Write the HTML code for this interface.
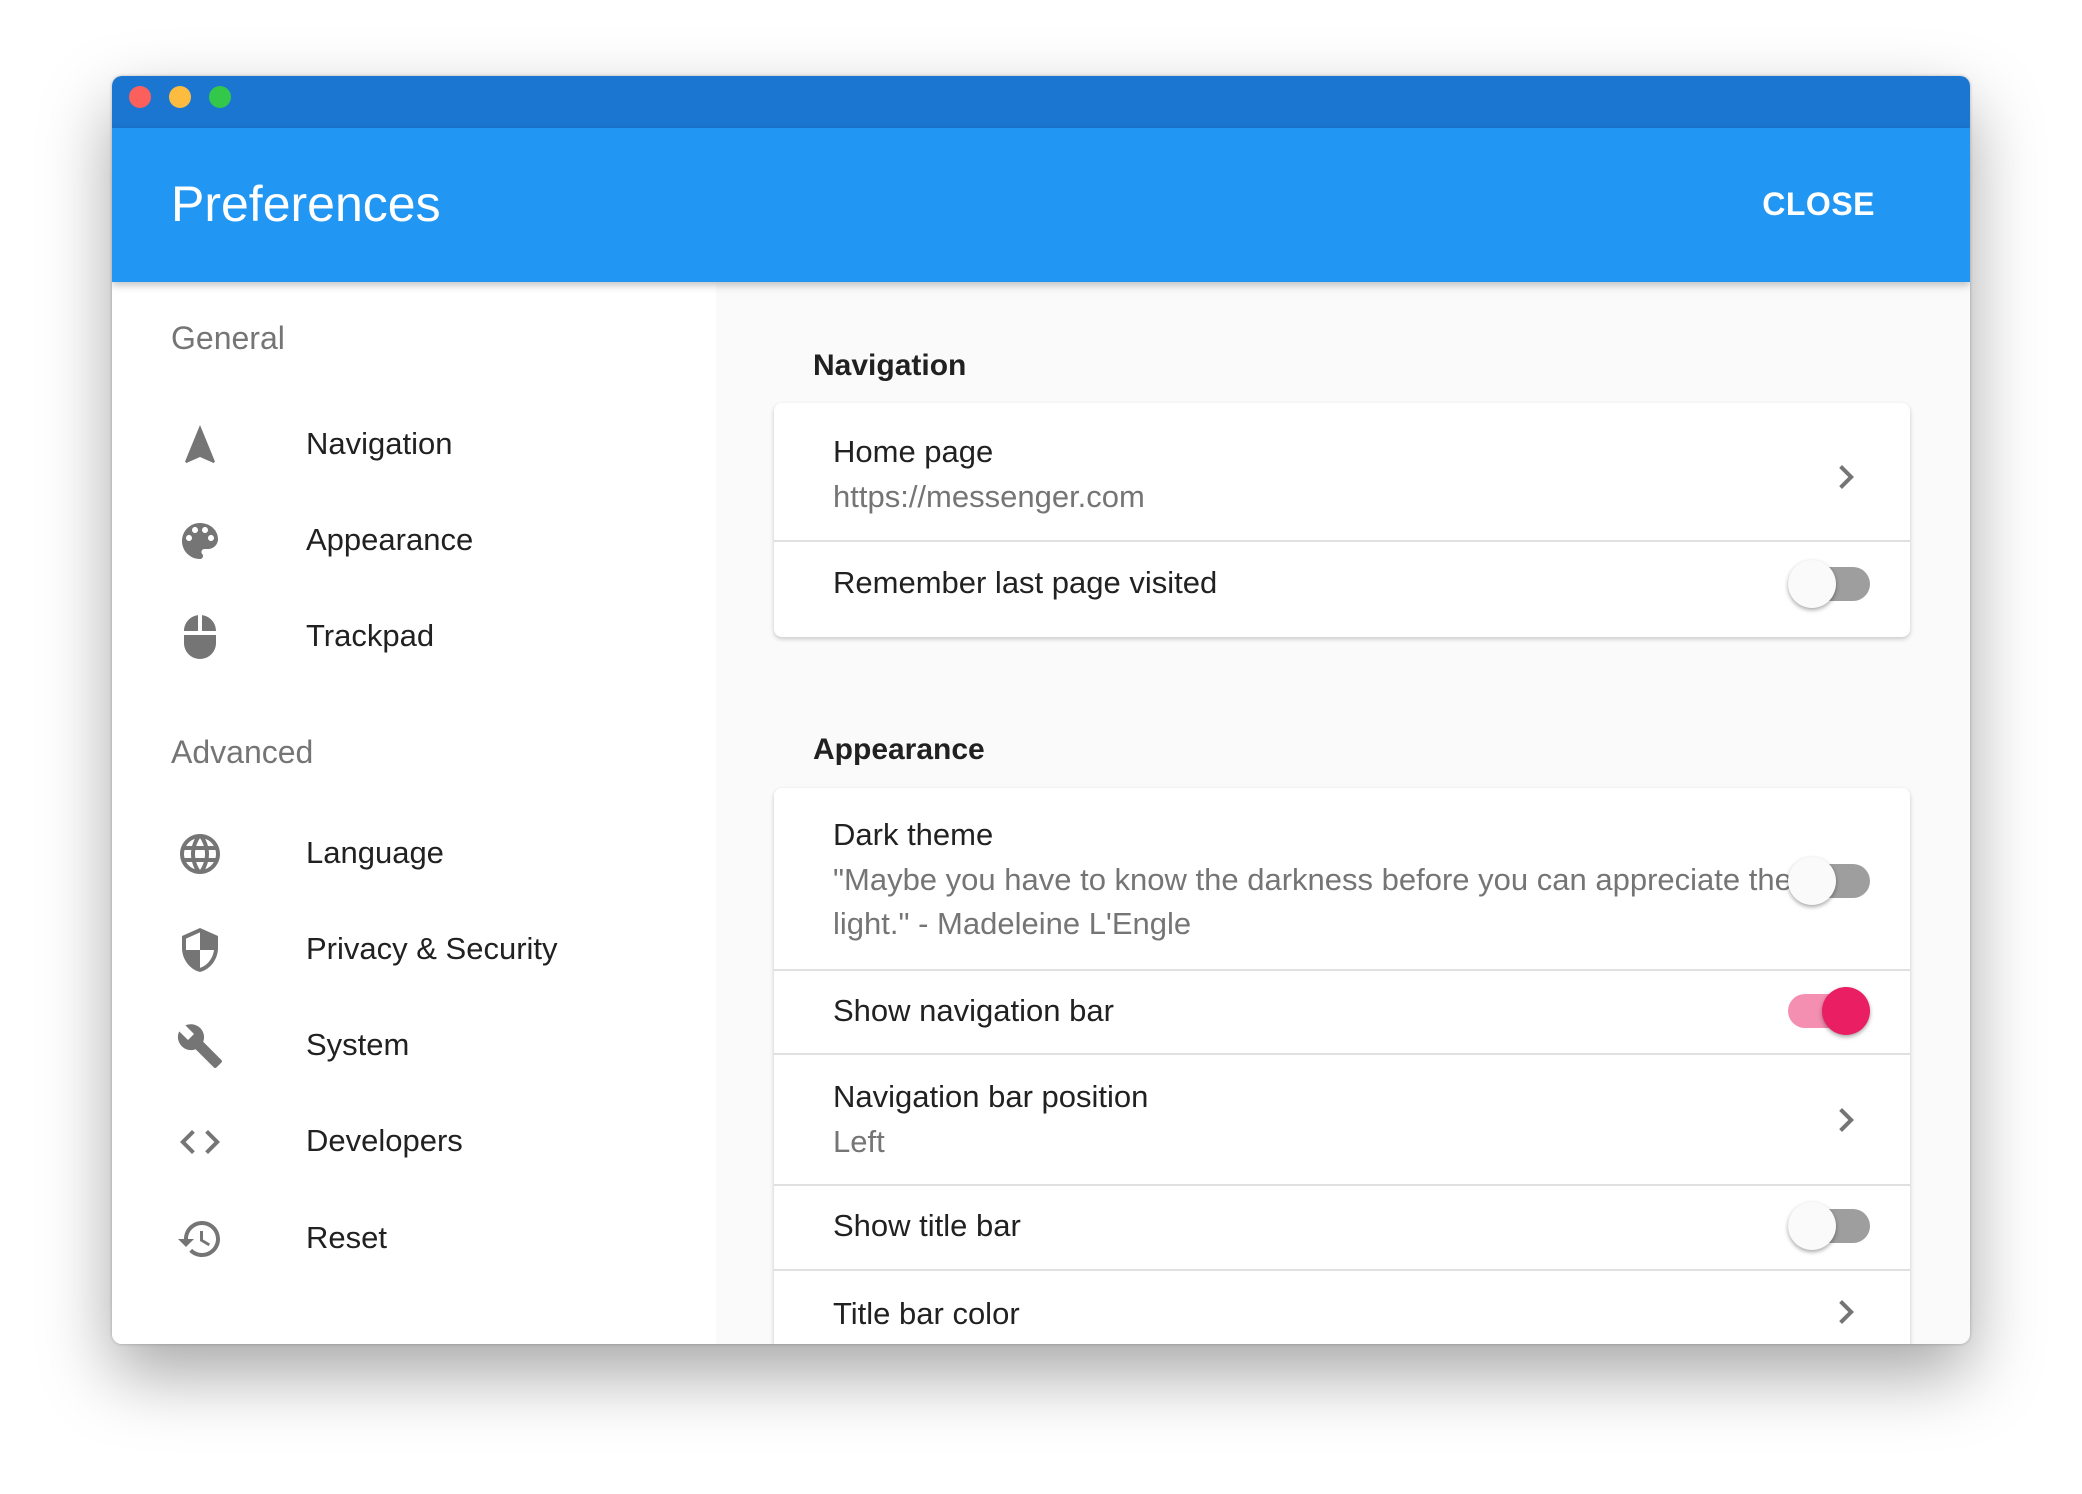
<!DOCTYPE html>
<html><head><meta charset="utf-8"><style>
*{margin:0;padding:0;box-sizing:border-box}
body{width:2082px;height:1494px;background:#fff;font-family:"Liberation Sans",sans-serif;position:relative;overflow:hidden}
.win{position:absolute;left:112px;top:76px;width:1858px;height:1268px;border-radius:10px;overflow:hidden;background:#fafafa;box-shadow:0 30px 70px rgba(0,0,0,.35),0 0 3px rgba(0,0,0,.25)}
.tb{position:absolute;left:0;top:0;width:100%;height:52px;background:#1b76d2}
.dot{position:absolute;top:10px;width:22px;height:22px;border-radius:50%}
.hdr{position:absolute;left:0;top:52px;width:100%;height:154px;background:#2196f3;box-shadow:0 3px 8px rgba(0,0,0,.25);z-index:2}
.hdr .t{position:absolute;left:59px;top:47px;font-size:50px;color:#fff}
.hdr .c{position:absolute;right:95px;top:58px;font-size:32px;color:#fff;font-weight:bold;letter-spacing:.5px}
.side{position:absolute;left:0;top:206px;width:604px;height:1069px;background:#fff}
.sh{position:absolute;left:59px;font-size:32px;color:#757575}
.si{position:absolute;left:194px;font-size:31px;color:#212121}
.ic{position:absolute;left:64px;width:48px;height:48px;fill:#757575}
.t2{position:absolute;font-size:30px;font-weight:bold;color:#212121;left:701px}
.card{position:absolute;left:662px;width:1136px;background:#fff;border-radius:8px;box-shadow:0 2px 5px rgba(0,0,0,.2)}
.rt{position:absolute;left:59px;font-size:31px;color:#212121}
.rs{position:absolute;left:59px;font-size:31px;color:#757575}
.dv{position:absolute;left:0;width:100%;height:2px;background:#e0e0e0}
.tg{position:absolute;left:1014px;width:82px;height:34px;border-radius:17px;background:#9e9e9e}
.tg::after{content:"";position:absolute;left:0;top:-7px;width:48px;height:48px;border-radius:50%;background:#fafafa;box-shadow:0 2px 4px rgba(0,0,0,.35)}
.tg.on{background:#f48fb1}
.tg.on::after{left:34px;background:#e91e63}
.ch{position:absolute;left:1048px;width:48px;height:48px;fill:#757575}
</style></head><body>
<div class="win">
<div class="tb">
<div class="dot" style="left:17px;background:#fc605c"></div>
<div class="dot" style="left:57px;background:#fdbc40"></div>
<div class="dot" style="left:97px;background:#34c84a"></div>
</div>
<div class="hdr"><div class="t">Preferences</div><div class="c">CLOSE</div></div>
<div class="side">
<div class="sh" style="top:38px">General</div>
<svg class="ic" style="top:139px" viewBox="0 0 24 24"><path d="M12 2L4.5 20.29l.71.71L12 18l6.79 3 .71-.71z"/></svg>
<div class="si" style="top:144px">Navigation</div>
<svg class="ic" style="top:235px" viewBox="0 0 24 24"><path d="M12 3c-4.97 0-9 4.03-9 9s4.03 9 9 9c.83 0 1.5-.67 1.5-1.5 0-.39-.15-.74-.39-1.01-.23-.26-.38-.61-.38-.99 0-.83.67-1.5 1.5-1.5H16c2.76 0 5-2.24 5-5 0-4.42-4.03-8-9-8zm-5.5 9c-.83 0-1.5-.67-1.5-1.5S5.67 9 6.5 9 8 9.67 8 10.5 7.33 12 6.5 12zm3-4C8.67 8 8 7.33 8 6.5S8.67 5 9.5 5s1.5.67 1.5 1.5S10.33 8 9.5 8zm5 0c-.83 0-1.5-.67-1.5-1.5S13.67 5 14.5 5s1.5.67 1.5 1.5S15.33 8 14.5 8zm3 4c-.83 0-1.5-.67-1.5-1.5S16.67 9 17.5 9s1.5.67 1.5 1.5-.67 1.5-1.5 1.5z"/></svg>
<div class="si" style="top:240px">Appearance</div>
<svg class="ic" style="top:331px" viewBox="0 0 24 24"><path d="M13 1.07V9h7c0-4.08-3.05-7.44-7-7.93zM4 15c0 4.42 3.58 8 8 8s8-3.58 8-8v-4H4v4zm7-13.93C7.05 1.56 4 4.92 4 9h7V1.07z"/></svg>
<div class="si" style="top:336px">Trackpad</div>
<div class="sh" style="top:452px">Advanced</div>
<svg class="ic" style="top:548px" viewBox="0 0 24 24"><path d="M11.99 2C6.47 2 2 6.48 2 12s4.47 10 9.99 10C17.52 22 22 17.52 22 12S17.52 2 11.99 2zm6.93 6h-2.95c-.32-1.25-.78-2.45-1.38-3.56 1.84.63 3.37 1.91 4.33 3.56zM12 4.04c.83 1.2 1.48 2.53 1.91 3.96h-3.82c.43-1.43 1.08-2.76 1.91-3.96zM4.26 14C4.1 13.36 4 12.69 4 12s.1-1.36.26-2h3.38c-.08.66-.14 1.32-.14 2 0 .68.06 1.34.14 2H4.26zm.82 2h2.95c.32 1.25.78 2.45 1.38 3.56-1.84-.63-3.37-1.9-4.33-3.56zm2.95-8H5.08c.96-1.66 2.49-2.93 4.33-3.56C8.81 5.55 8.35 6.75 8.03 8zM12 19.96c-.83-1.2-1.48-2.53-1.91-3.96h3.82c-.43 1.43-1.08 2.76-1.91 3.96zM14.34 14H9.66c-.09-.66-.16-1.32-.16-2 0-.68.07-1.35.16-2h4.68c.09.65.16 1.32.16 2 0 .68-.07 1.34-.16 2zm.25 5.56c.6-1.11 1.06-2.31 1.38-3.56h2.95c-.96 1.65-2.49 2.93-4.33 3.56zM16.36 14c.08-.66.14-1.32.14-2 0-.68-.06-1.34-.14-2h3.38c.16.64.26 1.31.26 2s-.1 1.36-.26 2h-3.38z"/></svg>
<div class="si" style="top:553px">Language</div>
<svg class="ic" style="top:644px" viewBox="0 0 24 24"><path d="M12 1L3 5v6c0 5.55 3.84 10.74 9 12 5.16-1.26 9-6.45 9-12V5l-9-4zm0 10.99h7c-.53 4.12-3.28 7.79-7 8.94V12H5V6.3l7-3.11v8.8z"/></svg>
<div class="si" style="top:649px">Privacy &amp; Security</div>
<svg class="ic" style="top:740px" viewBox="0 0 24 24"><path d="M22.7 19l-9.1-9.1c.9-2.3.4-5-1.5-6.9-2-2-5-2.4-7.4-1.3L9 6 6 9 1.6 4.7C.4 7.1.9 10.1 2.9 12.1c1.9 1.9 4.6 2.4 6.9 1.5l9.1 9.1c.4.4 1 .4 1.4 0l2.3-2.3c.5-.4.5-1.1.1-1.4z"/></svg>
<div class="si" style="top:745px">System</div>
<svg class="ic" style="top:836px" viewBox="0 0 24 24"><path d="M9.4 16.6L4.8 12l4.6-4.6L8 6l-6 6 6 6 1.4-1.4zm5.2 0l4.6-4.6-4.6-4.6L16 6l6 6-6 6-1.4-1.4z"/></svg>
<div class="si" style="top:841px">Developers</div>
<svg class="ic" style="top:933px" viewBox="0 0 24 24"><path d="M13 3c-4.97 0-9 4.03-9 9H1l3.89 3.89.07.14L9 12H6c0-3.87 3.13-7 7-7s7 3.13 7 7-3.13 7-7 7c-1.93 0-3.68-.79-4.94-2.06l-1.42 1.42C8.27 19.99 10.51 21 13 21c4.97 0 9-4.03 9-9s-4.03-9-9-9zm-1 5v5l4.28 2.54.72-1.21-3.5-2.08V8H12z"/></svg>
<div class="si" style="top:938px">Reset</div>
</div>

<div class="t2" style="top:273px">Navigation</div>
<div class="card" style="top:327px;height:234px">
<div class="rt" style="top:31px">Home page</div>
<div class="rs" style="top:76px">https://messenger.com</div>
<svg class="ch" style="top:50px" viewBox="0 0 24 24"><path d="M10 6L8.59 7.41 13.17 12l-4.58 4.59L10 18l6-6z"/></svg>
<div class="dv" style="top:137px"></div>
<div class="rt" style="top:162px">Remember last page visited</div>
<div class="tg" style="top:164px"></div>
</div>

<div class="t2" style="top:657px">Appearance</div>
<div class="card" style="top:712px;height:600px">
<div class="rt" style="top:29px">Dark theme</div>
<div class="rs" style="top:74px">"Maybe you have to know the darkness before you can appreciate the</div>
<div class="rs" style="top:118px">light." - Madeleine L'Engle</div>
<div class="tg" style="top:76px"></div>
<div class="dv" style="top:181px"></div>
<div class="rt" style="top:205px">Show navigation bar</div>
<div class="tg on" style="top:206px"></div>
<div class="dv" style="top:265px"></div>
<div class="rt" style="top:291px">Navigation bar position</div>
<div class="rs" style="top:336px">Left</div>
<svg class="ch" style="top:308px" viewBox="0 0 24 24"><path d="M10 6L8.59 7.41 13.17 12l-4.58 4.59L10 18l6-6z"/></svg>
<div class="dv" style="top:396px"></div>
<div class="rt" style="top:420px">Show title bar</div>
<div class="tg" style="top:421px"></div>
<div class="dv" style="top:481px"></div>
<div class="rt" style="top:508px">Title bar color</div>
<svg class="ch" style="top:500px" viewBox="0 0 24 24"><path d="M10 6L8.59 7.41 13.17 12l-4.58 4.59L10 18l6-6z"/></svg>
</div>
</div>
</body></html>
